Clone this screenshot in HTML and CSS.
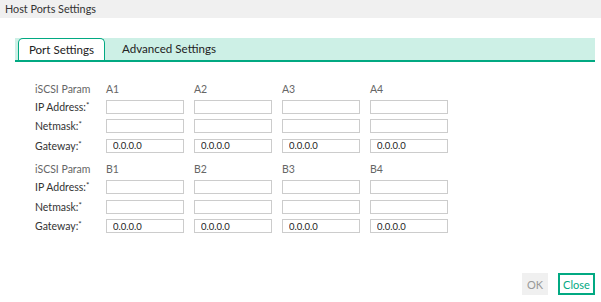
FILE: index.html
```html
<!DOCTYPE html>
<html lang="en">
<head>
    <meta charset="UTF-8">
    <meta name="viewport" content="width=device-width, initial-scale=1.0">
    <title>Host Ports Settings</title>
    <link rel="stylesheet" href="styles.css">
</head>
<body>
    <div class="dialog">
        <div class="titlebar">Host Ports Settings</div>

        <div class="content">
            <div class="tabs">
                <div class="tab active">Port Settings</div>
                <div class="tab">Advanced Settings</div>
            </div>

            <div class="port-grid">
                <div class="param">iSCSI Param</div>
                <div class="port">A1</div>
                <div class="port">A2</div>
                <div class="port">A3</div>
                <div class="port">A4</div>

                <div class="label">IP Address:<sup>*</sup></div>
                <input class="field" type="text">
                <input class="field" type="text">
                <input class="field" type="text">
                <input class="field" type="text">

                <div class="label">Netmask:<sup>*</sup></div>
                <input class="field" type="text">
                <input class="field" type="text">
                <input class="field" type="text">
                <input class="field" type="text">

                <div class="label">Gateway:<sup>*</sup></div>
                <input class="field" type="text" value="0.0.0.0">
                <input class="field" type="text" value="0.0.0.0">
                <input class="field" type="text" value="0.0.0.0">
                <input class="field" type="text" value="0.0.0.0">
            </div>

            <div class="port-grid second">
                <div class="param">iSCSI Param</div>
                <div class="port">B1</div>
                <div class="port">B2</div>
                <div class="port">B3</div>
                <div class="port">B4</div>

                <div class="label">IP Address:<sup>*</sup></div>
                <input class="field" type="text">
                <input class="field" type="text">
                <input class="field" type="text">
                <input class="field" type="text">

                <div class="label">Netmask:<sup>*</sup></div>
                <input class="field" type="text">
                <input class="field" type="text">
                <input class="field" type="text">
                <input class="field" type="text">

                <div class="label">Gateway:<sup>*</sup></div>
                <input class="field" type="text" value="0.0.0.0">
                <input class="field" type="text" value="0.0.0.0">
                <input class="field" type="text" value="0.0.0.0">
                <input class="field" type="text" value="0.0.0.0">
            </div>
        </div>

        <div class="footer">
            <button class="btn btn-ok">OK</button>
            <button class="btn btn-close">Close</button>
        </div>
    </div>
</body>
</html>
```

FILE: styles.css
```css
body {
    font-family: Lato, 'Liberation Sans', Arial, sans-serif;
    margin: 0;
    padding: 0;
    background-color: #fff;
    color: #333;
}

.dialog {
    display: flex;
    flex-direction: column;
    height: 100vh;
}

.titlebar {
    background-color: #f0f0f0;
    height: 18px;
    line-height: 17px;
    padding-left: 5px;
    font-size: 10.8px;
    color: #333;
}

.content {
    flex: 1;
    padding: 20px 6px 0 15px;
}

.tabs {
    display: flex;
    background-color: #cdf0e6;
    border-bottom: 2px solid #01a982;
    height: 22px;
    padding-left: 3px;
}

.tab {
    font-size: 11.6px;
    line-height: 22px;
    padding: 0 12px;
    color: #222;
    white-space: nowrap;
}

.tab.active {
    background-color: #fff;
    border: 1px solid #01a982;
    border-bottom: none;
    border-radius: 5px 5px 0 0;
    width: 87px;
    box-sizing: border-box;
    text-align: center;
    padding: 0;
    line-height: 21px;
}

.tab + .tab {
    padding-left: 17px;
}

.port-grid {
    display: grid;
    grid-template-columns: 61px repeat(4, 78px);
    grid-template-rows: 17px repeat(3, 19.5px);
    column-gap: 10px;
    align-items: center;
    margin: 18px 0 0 20px;
    font-size: 10.5px;
}

.port-grid.second {
    margin-top: 5px;
}

.param,
.port {
    color: #666;
    white-space: nowrap;
}

.label {
    color: #333;
    white-space: nowrap;
}

.label sup {
    font-size: 8px;
    vertical-align: 3px;
    line-height: 0;
}

.field {
    box-sizing: border-box;
    width: 78px;
    height: 14px;
    border: 1px solid #cccccc;
    padding: 0 5px 0 6px;
    margin: 0;
    font-family: inherit;
    font-size: 9.5px;
    color: #222;
    outline: none;
}

.footer {
    display: flex;
    justify-content: flex-end;
    gap: 10px;
    padding: 0 6px 7px 0;
}

.btn {
    font-family: inherit;
    font-size: 11px;
    height: 22px;
    padding: 0;
    border: 1px solid transparent;
    background: none;
    cursor: pointer;
}

.btn-ok {
    background-color: #f0f0f0;
    color: #999;
    width: 26px;
}

.btn-close {
    border: 2px solid #01a982;
    color: #01a982;
    width: 37px;
}
```
